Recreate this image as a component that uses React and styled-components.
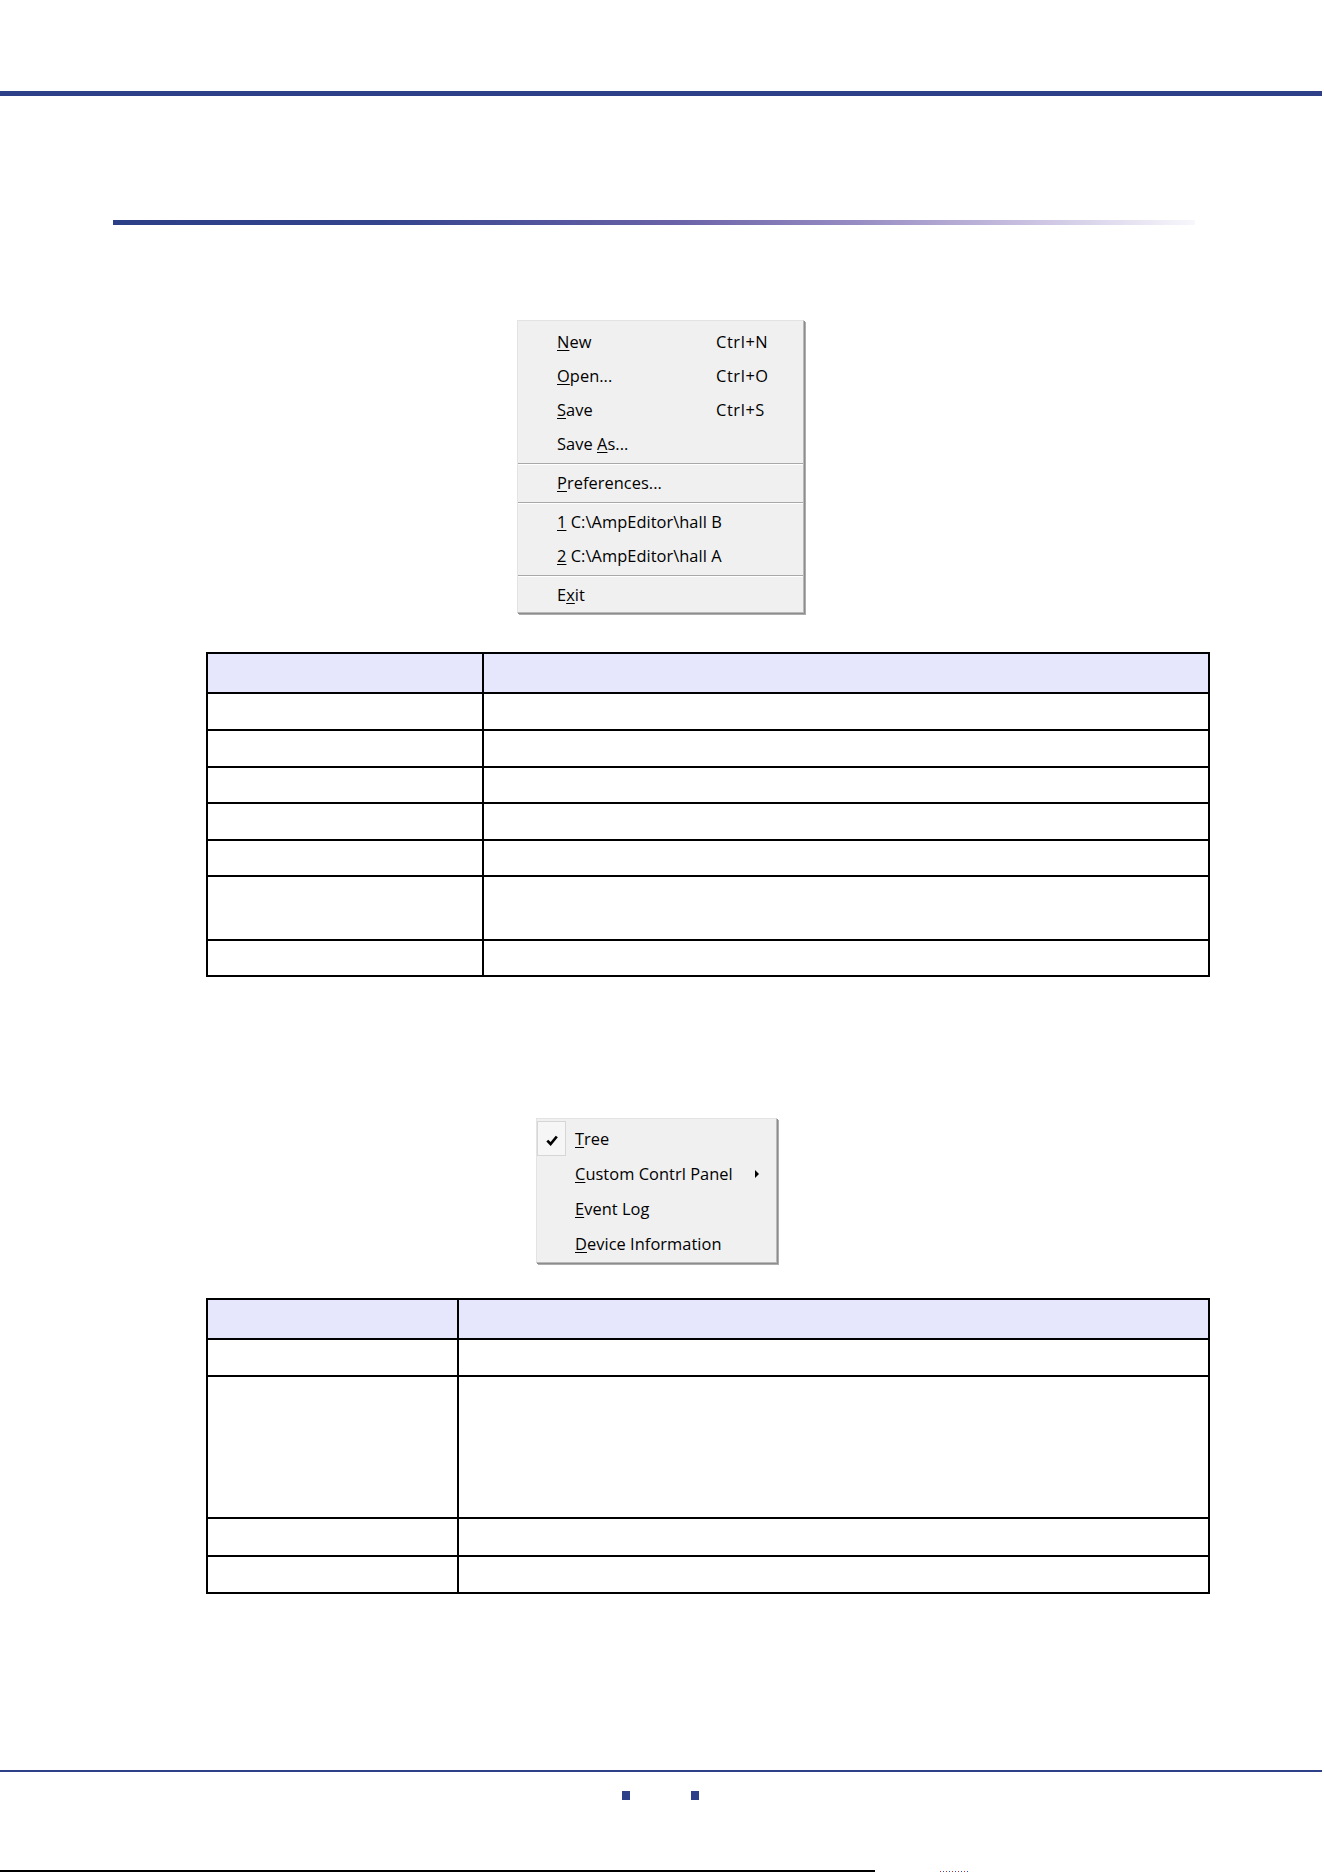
import React from "react";
import styled, { createGlobalStyle } from "styled-components";

const GlobalStyle = createGlobalStyle`
  body {
    margin: 0;
    background: #ffffff;
  }
`;

const NAVY = "#2d4088";

const Page = styled.div`
  width: 1324px;
  height: 1872px;
  display: flex;
  flex-direction: column;
  align-items: flex-start;
  overflow: hidden;
  font-family: "Open Sans", "Noto Sans", sans-serif;
  color: #000;

  & > * {
    flex-shrink: 0;
  }
`;

const TopRule = styled.div`
  margin-top: 91px;
  width: 1322px;
  height: 5px;
  background: ${NAVY};
`;

const TitleRule = styled.div`
  margin-top: 124px;
  margin-left: 113px;
  width: 1082px;
  height: 5px;
  background: linear-gradient(
    90deg,
    #2b3f87 0%,
    #34448d 25%,
    #6a62a8 52%,
    #958ac1 68%,
    #c8bfe0 84%,
    #f8f7fc 100%
  );
`;

const Menu = styled.div`
  box-sizing: border-box;
  margin-top: ${(p) => p.$top}px;
  margin-left: ${(p) => p.$left}px;
  width: ${(p) => p.$width}px;
  padding: ${(p) => p.$pad}px 0 1px;
  background: #f0f0f0;
  border-top: 1px solid #e3e3e3;
  border-left: 1px solid #e3e3e3;
  border-right: 1px solid #b9b9b9;
  border-bottom: 1px solid #b9b9b9;
  box-shadow: 1px 1px 0 #8c8c8c, 2px 2px 0 #adadad;
  font-size: 16.4px;
  letter-spacing: 0.05px;
  display: flex;
  flex-direction: column;
`;

const Item = styled.div`
  height: ${(p) => p.$h}px;
  display: flex;
  align-items: center;
  padding-left: ${(p) => p.$indent}px;
  white-space: nowrap;
`;

const Label = styled.span`
  width: ${(p) => p.$w || "auto"};
  u {
    text-decoration-thickness: 1px;
    text-underline-offset: 2px;
  }
`;

const Shortcut = styled.span`
  letter-spacing: 0.6px;
`;

const Separator = styled.div`
  margin-top: 3px;
  height: 1px;
  background: #a8a8a8;
  border-bottom: 1px solid #ffffff;
`;

const CheckCell = styled.div`
  box-sizing: border-box;
  width: 29px;
  height: 100%;
  margin-right: 9px;
  display: flex;
  align-items: center;
  justify-content: center;
  padding-top: 3px;
  border: 1px solid ${(p) => (p.$on ? "#d6d6d6" : "transparent")};
  background: ${(p) => (p.$on ? "#f6f6f6" : "transparent")};
`;

const SubArrow = styled.span`
  margin-left: auto;
  margin-right: 17px;
  width: 0;
  height: 0;
  border-top: 4px solid transparent;
  border-bottom: 4px solid transparent;
  border-left: 4px solid #000;
`;

const Table = styled.div`
  margin-top: ${(p) => p.$top}px;
  margin-left: 206px;
  width: 1004px;
  box-sizing: border-box;
  display: grid;
  grid-template-columns: ${(p) => p.$first}px 1fr;
  border-top: 2px solid #000;
  border-left: 2px solid #000;
`;

const Cell = styled.div`
  height: ${(p) => p.$h}px;
  border-right: 2px solid #000;
  border-bottom: 2px solid #000;
  background: ${(p) => (p.$head ? "#e6e6fc" : "#ffffff")};
`;

const FootRule = styled.div`
  margin-top: 176px;
  width: 1322px;
  height: 2px;
  background: ${NAVY};
`;

const Marks = styled.div`
  margin-top: 19px;
  margin-left: 622px;
  display: flex;
  gap: 61px;
`;

const Mark = styled.span`
  width: 8px;
  height: 9px;
  background: ${NAVY};
`;

const EdgeRow = styled.div`
  margin-top: 70px;
  display: flex;
  align-items: flex-end;
  height: 2px;
`;

const EdgeLine = styled.div`
  width: 875px;
  height: 2px;
  background: #000;
`;

const EdgeDots = styled.div`
  margin-left: 65px;
  width: 28px;
  height: 1px;
  background: repeating-linear-gradient(
    90deg,
    #c0392b 0 1px,
    transparent 1px 3px,
    #2a56c6 3px 4px,
    transparent 4px 6px
  );
`;

function Check() {
  return (
    <svg width="12" height="11" viewBox="0 0 12 11">
      <path
        d="M1.3 5.6 L4.6 9 L10.8 1.5"
        fill="none"
        stroke="#000"
        strokeWidth="2.7"
        strokeLinejoin="miter"
      />
    </svg>
  );
}

const fileItems = [
  { key: "N", rest: "ew", cut: "Ctrl+N" },
  { key: "O", rest: "pen...", cut: "Ctrl+O" },
  { key: "S", rest: "ave", cut: "Ctrl+S" },
];

const viewItems = [
  { key: "T", rest: "ree", checked: true },
  { key: "C", rest: "ustom Contrl Panel", sub: true },
  { key: "E", rest: "vent Log" },
  { key: "D", rest: "evice Information" },
];

const fileRows = [38, 35, 35, 34, 35, 34, 62, 34];
const viewRows = [38, 35, 140, 36, 35];

function FileMenu() {
  return (
    <Menu $top={95} $left={517} $width={287} $pad={3}>
      {fileItems.map((it) => (
        <Item key={it.key} $h={34} $indent={39}>
          <Label $w="159px">
            <u>{it.key}</u>
            {it.rest}
          </Label>
          <Shortcut>{it.cut}</Shortcut>
        </Item>
      ))}
      <Item $h={34} $indent={39}>
        <Label>
          Save <u>A</u>s...
        </Label>
      </Item>
      <Separator />
      <Item $h={34} $indent={39}>
        <Label>
          <u>P</u>references...
        </Label>
      </Item>
      <Separator />
      <Item $h={34} $indent={39}>
        <Label>
          <u>1</u> C:\AmpEditor\hall B
        </Label>
      </Item>
      <Item $h={34} $indent={39}>
        <Label>
          <u>2</u> C:\AmpEditor\hall A
        </Label>
      </Item>
      <Separator />
      <Item $h={34} $indent={39}>
        <Label>
          E<u>x</u>it
        </Label>
      </Item>
    </Menu>
  );
}

function ViewMenu() {
  return (
    <Menu $top={141} $left={536} $width={241} $pad={2}>
      {viewItems.map((it) => (
        <Item key={it.key} $h={35} $indent={0}>
          <CheckCell $on={it.checked}>{it.checked && <Check />}</CheckCell>
          <Label>
            <u>{it.key}</u>
            {it.rest}
          </Label>
          {it.sub && <SubArrow />}
        </Item>
      ))}
    </Menu>
  );
}

function GridTable({ top, first, rows }) {
  return (
    <Table $top={top} $first={first}>
      {rows.map((h, i) => (
        <React.Fragment key={i}>
          <Cell $h={h} $head={i === 0} />
          <Cell $h={h} $head={i === 0} />
        </React.Fragment>
      ))}
    </Table>
  );
}

export default function App() {
  return (
    <Page>
      <GlobalStyle />
      <TopRule />
      <TitleRule />
      <FileMenu />
      <GridTable top={39} first={276} rows={fileRows} />
      <ViewMenu />
      <GridTable top={35} first={251} rows={viewRows} />
      <FootRule />
      <Marks>
        <Mark />
        <Mark />
      </Marks>
      <EdgeRow>
        <EdgeLine />
        <EdgeDots />
      </EdgeRow>
    </Page>
  );
}
